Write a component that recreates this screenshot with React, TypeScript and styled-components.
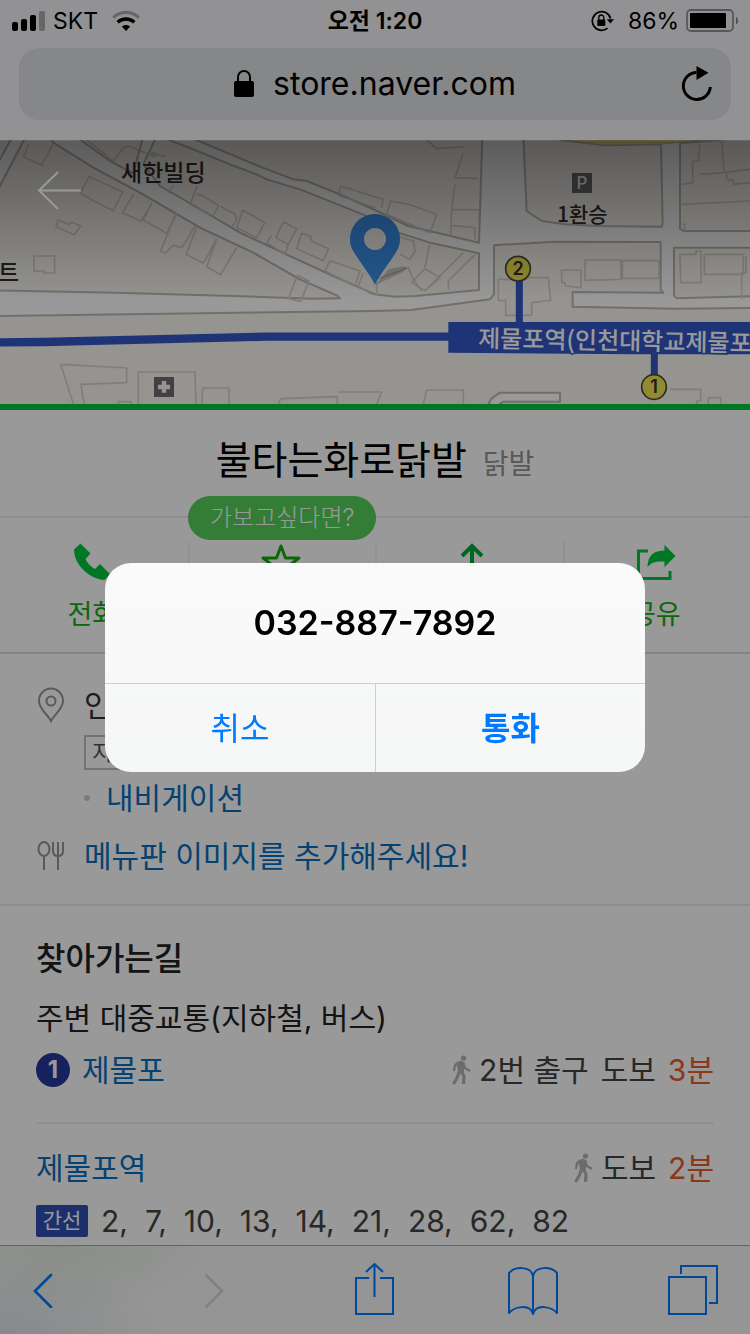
import React from 'react';
import styled, { createGlobalStyle } from 'styled-components';

const GlobalStyle = createGlobalStyle`
  *, *::before, *::after { box-sizing: border-box; }
  body {
    margin: 0;
    background: #fff;
    color: #333;
    font-family: Inter, 'Noto Sans CJK KR', sans-serif;
    font-size: 30px;
    line-height: 40px;
  }
  button {
    margin: 0;
    padding: 0;
    border: 0;
    background: none;
    color: inherit;
    font: inherit;
    cursor: pointer;
  }
  a { color: inherit; text-decoration: none; }
  h1, h2, h3, p, ul { margin: 0; padding: 0; font-size: inherit; font-weight: 400; }
  ul { list-style: none; }
  svg { display: block; flex: none; }
`;

const Page = styled.div`
  display: flex;
  flex-direction: column;
  min-height: 100vh;
  padding-bottom: 89px;
`;

/* ---------- Browser chrome ---------- */

const Chrome = styled.header`
  height: 140px;
  padding: 0 19px;
  background: #f3f4f7;
`;

const StatusBar = styled.div`
  display: grid;
  grid-template-columns: 1fr auto 1fr;
  align-items: center;
  height: 40px;
  margin: 0 -8px;
  color: #000;
  font-size: 23px;
  line-height: 42px;
`;

const StatusSide = styled.div<{ $end?: boolean }>`
  display: flex;
  align-items: center;
  justify-content: ${(p) => (p.$end ? 'flex-end' : 'flex-start')};
  gap: ${(p) => (p.$end ? 7 : 8)}px;
`;

const Carrier = styled.span`
  margin-right: 6px;
`;

const Percent = styled.span`
  margin-left: 6px;
`;

const Clock = styled.time`
  font-weight: 600;
`;

const AddressField = styled.div`
  display: grid;
  grid-template-columns: 1fr auto 1fr;
  align-items: center;
  height: 72px;
  margin-top: 8px;
  padding: 0 18px;
  border-radius: 20px;
  background: #dfe1e4;
`;

const AddressText = styled.div`
  grid-column: 2;
  display: flex;
  align-items: center;
  gap: 18px;
  color: #000;
  font-size: 32px;
  line-height: 42px;
`;

const Reload = styled.button`
  justify-self: end;
`;

/* ---------- Map ---------- */

const MapArea = styled.section`
  position: relative;
  height: 270px;
  overflow: hidden;
  background: #fff;
  border-bottom: 6px solid #00c73c;
`;

const MapShade = styled.div`
  position: absolute;
  inset: 0 0 auto 0;
  height: 160px;
  border-top: 1px solid rgba(0, 0, 0, 0.3);
  background: linear-gradient(rgba(0, 0, 0, 0.4), rgba(0, 0, 0, 0));
`;

const MapBack = styled.button`
  position: absolute;
  left: 36px;
  top: 29px;
`;

/* ---------- Store heading and actions ---------- */

const StoreHead = styled.section`
  display: flex;
  align-items: baseline;
  justify-content: center;
  gap: 16px;
  height: 106px;
  padding-top: 20px;
  line-height: 60px;
`;

const StoreName = styled.h1`
  color: #000;
  font-size: 39px;
`;

const StoreKind = styled.span`
  color: #959595;
  font-size: 28px;
`;

const Actions = styled.nav`
  display: grid;
  grid-template-columns: repeat(4, 1fr);
  height: 138px;
  padding-top: 24px;
  border-top: 2px solid #ececef;
  border-bottom: 2px solid #dadade;
`;

const ActionCell = styled.div`
  position: relative;
  display: flex;
  justify-content: center;
  height: 90px;
  padding-right: 3px;
  & + & { border-left: 2px solid #f2f2f4; }
`;

const Action = styled.button`
  display: flex;
  flex-direction: column;
  align-items: center;
  gap: 13px;
  color: #12ae12;
  font-size: 27px;
`;

const Tip = styled.span`
  position: absolute;
  top: -46px;
  left: 50%;
  width: 188px;
  height: 44px;
  transform: translateX(-50%);
  border-radius: 22px;
  background: rgba(70, 205, 78, 0.92);
  color: #fff;
  font-size: 24px;
  font-weight: 300;
  line-height: 44px;
  text-align: center;
`;

/* ---------- Information ---------- */

const Info = styled.section`
  display: flex;
  flex-direction: column;
  padding: 31px 36px 28px;
  border-bottom: 2px solid #ececef;
`;

const InfoRow = styled.div<{ $top?: number }>`
  display: grid;
  grid-template-columns: 48px 1fr;
  align-items: center;
  margin-top: ${(p) => p.$top ?? 0}px;
`;

const InfoSub = styled.div<{ $top: number }>`
  display: flex;
  align-items: center;
  gap: 16px;
  margin-top: ${(p) => p.$top}px;
  padding-left: 48px;
`;

const LotBadge = styled.span`
  height: 35px;
  padding: 0 6px;
  border: 2px solid #c0c0c0;
  color: #555;
  font-size: 22px;
  line-height: 30px;
`;

const Bullet = styled.i`
  width: 6px;
  height: 6px;
  border-radius: 50%;
  background: #ccc;
`;

const BlueLink = styled.a`
  color: #0b6ebd;
`;

/* ---------- Directions ---------- */

const Directions = styled.section`
  padding: 32px 36px 0;
`;

const SectionTitle = styled.h2`
  color: #222;
  font-size: 32px;
  font-weight: 500;
  line-height: 42px;
`;

const SubTitle = styled.h3`
  margin-top: 18px;
  color: #222;
`;

const Stop = styled.div<{ $line?: boolean }>`
  display: flex;
  align-items: center;
  justify-content: space-between;
  padding: ${(p) => (p.$line ? '12px 0 32px' : '24px 0 0')};
  border-bottom: ${(p) => (p.$line ? '2px solid #f0f0f2' : '0')};
`;

const StopName = styled.div`
  display: flex;
  align-items: center;
  gap: 12px;
`;

const LineNumber = styled.span`
  width: 34px;
  height: 34px;
  border-radius: 50%;
  background: #26379c;
  color: #fff;
  font-size: 24px;
  font-weight: 700;
  line-height: 34px;
  text-align: center;
`;

const Walk = styled.div`
  display: flex;
  align-items: center;
  gap: 8px;
  color: #444;
`;

const WalkPart = styled.span`
  margin-right: 4px;
`;

const Minutes = styled.em`
  color: #e65c2e;
  font-style: normal;
`;

const Buses = styled.div`
  display: flex;
  align-items: center;
  gap: 13px;
  margin-top: 12px;
`;

const BusKind = styled.span`
  width: 52px;
  height: 32px;
  border-radius: 2px;
  background: #3350b4;
  color: #fff;
  font-size: 21px;
  line-height: 32px;
  text-align: center;
`;

const BusList = styled.ul`
  display: flex;
  gap: 17px;
  color: #444;
  line-height: 42px;
`;

/* ---------- Bottom toolbar ---------- */

const Toolbar = styled.nav`
  position: fixed;
  inset: auto 0 0 0;
  display: flex;
  align-items: center;
  justify-content: space-between;
  height: 89px;
  padding: 0 32px 0 33px;
  border-top: 1px solid #a9a9a9;
  background:
    radial-gradient(ellipse 160px 70px at 60px 0, rgba(120, 170, 110, 0.16), rgba(120, 170, 110, 0)),
    radial-gradient(ellipse 170px 80px at 0 90px, rgba(90, 130, 160, 0.16), rgba(90, 130, 160, 0)),
    #f9f9f9;
  color: #007aff;
`;

const ToolGroup = styled.div<{ $share: number }>`
  display: flex;
  align-items: center;
  justify-content: space-between;
  width: ${(p) => p.$share}%;
`;

const Tool = styled.button`
  &:disabled { color: #d8d8d8; }
`;

/* ---------- Call dialog ---------- */

const Scrim = styled.div`
  position: fixed;
  inset: 0;
  display: flex;
  align-items: center;
  justify-content: center;
  padding: 20px;
  background: rgba(0, 0, 0, 0.4);
`;

const Dialog = styled.div`
  width: 100%;
  max-width: 540px;
  overflow: hidden;
  border-radius: 26px;
  background: linear-gradient(#f9faf9, #f5f6f6);
`;

const DialogTitle = styled.h2`
  padding: 40px 20px;
  color: #000;
  font-size: 34px;
  font-weight: 600;
  text-align: center;
`;

const DialogButtons = styled.div`
  display: grid;
  grid-template-columns: 1fr 1fr;
  border-top: 1px solid #cdced0;
`;

const DialogButton = styled.button<{ $strong?: boolean }>`
  height: 88px;
  padding-top: 2px;
  color: #007aff;
  font-size: 32px;
  font-weight: ${(p) => (p.$strong ? 600 : 400)};
  & + & { border-left: 1px solid #cdced0; }
`;

/* ---------- Drawings ---------- */

const Signal = () => (
  <svg width="34" height="20" viewBox="0 0 34 20">
    <rect x="1" y="11" width="6" height="9" rx="2" />
    <rect x="10" y="8" width="6" height="12" rx="2" />
    <rect x="19" y="4" width="6" height="16" rx="2" />
    <rect x="28" y="0" width="6" height="20" rx="2" opacity=".3" />
  </svg>
);

const Wifi = () => (
  <svg width="28" height="20" viewBox="0 0 28 20" fill="none">
    <path d="M1.2 6.600C8.400 -.2 19.600 -.2 26.800 6.600" stroke="#000" strokeWidth="3.200" opacity=".3" />
    <path d="M5.600 11.200c4.800-4.300 12-4.300 16.800 0" stroke="#000" strokeWidth="3.400" />
    <path d="M9.800 15.600c2.400-2.100 6-2.100 8.400 0L14 20z" fill="#000" />
  </svg>
);

const RotationLock = () => (
  <svg width="24" height="22" viewBox="0 0 24 22" fill="none">
    <path d="M19.600 8.500A9.300 9.300 0 1 0 16.500 18.200" stroke="#000" strokeWidth="1.700" />
    <path d="M15.800 9.200h7.200L19.400 13.600z" fill="#000" />
    <rect x="6.300" y="9.600" width="8" height="6.400" rx="1" fill="#000" />
    <path d="M7.800 10V7.500a2.500 2.500 0 0 1 5 0V10" stroke="#000" strokeWidth="1.300" />
  </svg>
);

const Battery = () => (
  <svg width="53" height="24" viewBox="0 0 53 24">
    <rect x="1" y="1" width="46" height="21" rx="4" fill="none" stroke="#000" strokeOpacity=".4" strokeWidth="1.800" />
    <rect x="4" y="4" width="36" height="15" rx="1" />
    <path d="M50 8c2.800 1 2.800 6.500 0 7.500z" opacity=".45" />
  </svg>
);

const Padlock = () => (
  <svg width="21" height="28" viewBox="0 0 21 28">
    <rect x="0" y="11" width="20" height="16" rx="2" />
    <path d="M4 12V7a6 6 0 0 1 12 0v5" fill="none" stroke="#000" strokeWidth="2" />
  </svg>
);

const ReloadIcon = () => (
  <svg width="32" height="36" viewBox="0 0 32 36">
    <path d="M15.500 6.500A13.500 13.500 0 1 0 29.300 21" fill="none" stroke="#000" strokeWidth="3" />
    <path d="M15.500 0v14L27.500 6.800z" />
  </svg>
);

const StoreMap = () => (
  <svg width="100%" height="264" viewBox="0 0 750 264" preserveAspectRatio="xMidYMid slice">
    <g transform="scale(.33333) translate(0 -12)" fill="none" strokeLinejoin="round">
      {/* land blocks between the roads */}
      <g fill="#faf7f1" stroke="#c0b8b2" strokeWidth="6">
        <path d="M-10 463 350 470 700 480 940 488 1020 487 1010 478 900 430 760 350 600 275 420 170 280 95 160 20 150 0H78L0 150-10 170z" />
        <path d="M-10 90 0 70 38 0H-10z" />
        <path d="M225 0 330 75 400 112 430 0z" />
        <path d="M470 0 430 85 480 150 610 225 720 290 880 365 1000 420 1125 475 1185 482 1245 480 1437 462V352L1290 320 1195 290 1095 238 1000 200 900 160 800 130 770 115 690 85 580 40 490 5z" />
        <path d="M560 0 680 50 780 92 880 130 920 135 1020 175 1125 222 1225 270 1437 320 1447 0z" />
        <path d="M1570 0 1580 225 1625 255 1695 265 1795 270 1985 272 1988 262 1983 25 1815 28 1680 12V0z" />
        <path d="M2040 22V278L2050 285H2270V0L2155 12z" />
        <path d="M2022 335V478L2030 487 2270 480V335z" />
        <path d="M-10 540 1125 525 1235 522 1470 490 1482 475V328L1665 317 1982 318V460L1990 470 1718 468V512L2030 518 2270 516V830H-10z" />
        <path d="M1465 804 1475 787 1500 770H1680V797H1510L1490 810z" fill="#fff" />
      </g>
      <path d="M1670 8 1815 28 1985 24 2150 8z" fill="#e8e08e" stroke="#c0b8b2" strokeWidth="3" />

      {/* buildings */}
      <g stroke="#d6d2cd" strokeWidth="5">
        <path d="M85 25 72 62 125 88 158 25M268 122 240 172 265 185 275 192 340 224 368 168zM400 175 368 230 422 255 455 205M455 200 430 252 500 292 530 232M525 240 482 345 495 352 520 328 545 335 562 310 585 270M590 275 558 355 610 382 650 308M650 308 620 392 662 416 710 335" />
        <path d="M175 252 168 272 222 296 242 270 215 258 208 266zM102 360H164V411H132V405H102zM892 418 865 488 903 496 926 435z" />
        <path d="M260 12 340 75 370 35 385 30 465 62 455 50 495 62M520 150 505 170M592 150 570 205 640 240M590 180 600 175 655 208 640 240M660 210 705 235 710 250 695 275M728 222 795 260 770 305 710 275zM850 258 890 278 865 325 828 305zM815 298 800 320 855 355 865 325M905 292 890 338 970 374 986 338 935 315 930 300zM990 374 975 405 1065 450 1080 405zM1090 410 1075 450 1115 475" />
        <path d="M1022 150 1015 178 1125 215M1022 150 1150 190M1280 12 1310 38 1390 32M1390 50 1365 125 1435 128M1365 145 1355 220 1440 222M1355 220 1352 300M1355 268 1425 275 1425 310M1172 195 1160 235 1290 290 1310 235 1225 205zM1150 190 1145 215M1190 300 1240 315 1245 345 1230 370 1200 355M1290 320 1275 395M1275 398 1235 440 1275 464 1320 425zM1390 350 1275 464M1425 355 1345 435V462M1130 430 1225 395 1240 430 1265 465M1130 430 1130 480" />
        <path d="M1495 430H1580V425H1645L1652 493 1595 500V538H1517V493H1495zM1685 402H1743V455L1695 450V440H1685zM1755 372H1863V430L1755 433zM1867 374H1977V427L1867 427zM2040 355H2088V345H2103V440H2042zM2113 355H2230V415L2113 415zM2238 360V410H2225V490M2100 25 2095 75H2078V140L2045 145M2165 12 2172 110 2100 115M2172 110 2250 100M2180 115V130L2200 133 2202 145 2250 140M2045 205 2250 195M2045 265H2054V285" />
        <path d="M182 685 380 696V740L243 745 252 804M182 685 220 804M415 804V708H585L588 804M605 804 608 756H687V804M355 804V797H393V804M835 804 842 788 1012 782V804M1015 768H1145L1130 804M1270 804 1280 762H1390V804M2010 760H2102V795H2090V804M2125 804V785H2162V804" />
      </g>

      {/* railway with its station */}
      <path d="M-10 619 130 618 800 602H1350" stroke="#3457c5" strokeWidth="25" />
      <path d="M1345 558H2260V655H1900L1345 650z" fill="#3457c5" />
      <path d="M1558 425V570M1963 640V730" stroke="#3457c5" strokeWidth="21" />
      <g fill="#f0e650" stroke="#4d4a38" strokeWidth="5">
        <circle cx="1554" cy="398" r="37" />
        <circle cx="1962" cy="753" r="37" />
      </g>

      {/* hospital and car park signs */}
      <g>
        <rect x="462" y="723" width="60" height="60" fill="#6f6c70" />
        <path d="M492 735V770M474 753H510" stroke="#faf7f1" strokeWidth="13" />
        <rect x="1716" y="111" width="60" height="60" fill="#6f6c70" />
      </g>

      {/* current place */}
      <path d="M1125 448 1165 400Q1245 380 1208 408z" fill="#000" opacity=".18" />
      <path d="M1125 447C1118 425 1062 355 1055 336A75 75 0 1 1 1195 336C1188 355 1132 425 1125 447z" fill="#3c93f0" />
      <circle cx="1125" cy="309" r="33" fill="#faf7f1" />
    </g>

    <g fill="#33302e" fontFamily="'Noto Sans CJK KR', sans-serif" fontSize="23" fontWeight="500">
      <text x="121" y="41">새한빌딩</text>
      <text x="-2" y="141">트</text>
      <text x="557" y="82" fontSize="21">1환승</text>
      <text x="478" y="207" fill="#fff" fontSize="24" fontWeight="500" stroke="#3457c5" strokeWidth="3" paintOrder="stroke" transform="rotate(1 478 207)">
        제물포역(인천대학교제물포
      </text>
      <g fontFamily="Inter, sans-serif" textAnchor="middle">
        <text x="518" y="135" fontSize="18" fontWeight="600">2</text>
        <text x="654" y="253" fontSize="18" fontWeight="600">1</text>
        <text x="582" y="49" fontSize="17" fontWeight="500" fill="#faf7f1">P</text>
      </g>
    </g>
  </svg>
);

const BackArrow = () => (
  <svg width="46" height="42" viewBox="0 0 46 42" fill="none" stroke="#fff" strokeWidth="2">
    <path d="M22 3 3 21.500 22 40M3 21.500H45" />
  </svg>
);

const Phone = () => (
  <svg width="40" height="40" viewBox="0 0 40 40" fill="#00c73c">
    <path d="M2 7.500 8.500 1.500 18.500 11.500 13.500 17Q16 23 23 27L28 22 38 32 32.500 38C20 38 2 24 2 7.500z" />
  </svg>
);

const Star = () => (
  <svg width="40" height="40" viewBox="0 0 40 40" fill="none" stroke="#12ae12" strokeWidth="3" strokeLinejoin="round">
    <path d="M20 4 24.500 16H38L27.500 24 31.500 37 20 29.500 8.500 37 12.500 24 2 16H15.500z" />
  </svg>
);

const UpArrow = () => (
  <svg width="40" height="40" viewBox="0 0 40 40" fill="none" stroke="#00a838" strokeWidth="4">
    <path d="M24 4V40M14 14 24 4 34 14" />
  </svg>
);

const Share = () => (
  <svg width="40" height="40" viewBox="0 0 40 40" fill="none">
    <path d="M12 9H2.500V36.500H34V29" stroke="#00c73c" strokeWidth="3" />
    <path d="M11.500 25C12 13 18 8.500 28.500 8.500V3L39.500 14 28.500 25V19.500C20 19 15.500 20 11.500 25z" fill="#00c73c" />
  </svg>
);

const PinOutline = () => (
  <svg width="30" height="36" viewBox="0 0 30 36" fill="none" stroke="#949494" strokeWidth="2">
    <path d="M15 34C12 28 3 22 3 14A12 12.500 0 0 1 27 14C27 22 18 28 15 34z" />
    <circle cx="15" cy="14" r="4.500" />
  </svg>
);

const Cutlery = () => (
  <svg width="30" height="32" viewBox="0 0 30 32" fill="none" stroke="#949494" strokeWidth="2">
    <ellipse cx="8" cy="9" rx="5.500" ry="7" />
    <path d="M8 16V30M17 2V11Q17 16 22 16 27 16 27 11V2M22 2V30" />
  </svg>
);

const Walker = () => (
  <svg width="20" height="30" viewBox="0 0 20 30" fill="none" stroke="#b4b4b4" strokeLinejoin="round">
    <circle cx="12.500" cy="3" r="2.600" fill="#b4b4b4" stroke="none" />
    <path d="M6 8 10 6.500 13 8 12 18 8 17z" fill="#b4b4b4" strokeWidth="1.500" />
    <path d="M8 7.500 4 10 3 16M12.500 9 14 13 19 16" strokeWidth="2.200" />
    <path d="M8.500 16 6.500 22 2.500 29M10.500 17 13 21 12.500 29" strokeWidth="3.200" />
  </svg>
);

const Chevron = ({ forward }: { forward?: boolean }) => (
  <svg width="20" height="36" viewBox="0 0 20 36" fill="none" stroke="currentColor" strokeWidth="2.600" strokeLinecap="round">
    <path d={forward ? 'M1 3 17 19 1 35' : 'M18 3 2 19 18 35'} />
  </svg>
);

const ShareSheet = () => (
  <svg width="44" height="54" viewBox="0 0 44 54" fill="none" stroke="currentColor" strokeWidth="2">
    <path d="M14 15H1V51H38V15H25M19.500 34V1M11 9 19.500 1 28 9" />
  </svg>
);

const Book = () => (
  <svg width="50" height="50" viewBox="0 0 50 50" fill="none" stroke="currentColor" strokeWidth="2" strokeLinejoin="round">
    <path d="M25 11V49M25 11C23 1 7 1 1 8V48C6 42 22 38 25 49 28 38 44 42 49 48V8C43 1 27 1 25 11z" />
  </svg>
);

const Tabs = () => (
  <svg width="50" height="50" viewBox="0 0 50 50" fill="none" stroke="currentColor" strokeWidth="2">
    <rect x="1" y="12" width="37" height="37" />
    <path d="M13 9V1H49V38H41" />
  </svg>
);

const BUSES = ['2', '7', '10', '13', '14', '21', '28', '62', '82'];

export default function App() {
  return (
    <>
      <GlobalStyle />
      <Page>
        <Chrome>
          <StatusBar>
            <StatusSide>
              <Signal />
              <Carrier>SKT</Carrier>
              <Wifi />
            </StatusSide>
            <Clock>오전 1:20</Clock>
            <StatusSide $end>
              <RotationLock />
              <Percent>86%</Percent>
              <Battery />
            </StatusSide>
          </StatusBar>
          <AddressField>
            <AddressText>
              <Padlock />
              <span>store.naver.com</span>
            </AddressText>
            <Reload aria-label="새로고침">
              <ReloadIcon />
            </Reload>
          </AddressField>
        </Chrome>

        <MapArea>
          <StoreMap />
          <MapShade />
          <MapBack aria-label="뒤로">
            <BackArrow />
          </MapBack>
        </MapArea>

        <StoreHead>
          <StoreName>불타는화로닭발</StoreName>
          <StoreKind>닭발</StoreKind>
        </StoreHead>

        <Actions>
          <ActionCell>
            <Action>
              <Phone />
              전화
            </Action>
          </ActionCell>
          <ActionCell>
            <Action aria-label="저장">
              <Star />
            </Action>
            <Tip>가보고싶다면?</Tip>
          </ActionCell>
          <ActionCell>
            <Action aria-label="길찾기">
              <UpArrow />
            </Action>
          </ActionCell>
          <ActionCell>
            <Action>
              <Share />
              공유
            </Action>
          </ActionCell>
        </Actions>

        <Info>
          <InfoRow>
            <PinOutline />
            <span>인천</span>
          </InfoRow>
          <InfoSub $top={10}>
            <LotBadge>지번</LotBadge>
          </InfoSub>
          <InfoSub $top={8}>
            <Bullet />
            <BlueLink href="#navigation">내비게이션</BlueLink>
          </InfoSub>
          <InfoRow $top={18}>
            <Cutlery />
            <BlueLink href="#menu">메뉴판 이미지를 추가해주세요!</BlueLink>
          </InfoRow>
        </Info>

        <Directions>
          <SectionTitle>찾아가는길</SectionTitle>
          <SubTitle>주변 대중교통(지하철, 버스)</SubTitle>
          <Stop $line>
            <StopName>
              <LineNumber>1</LineNumber>
              <BlueLink href="#subway">제물포</BlueLink>
            </StopName>
            <Walk>
              <Walker />
              <WalkPart>2번 출구</WalkPart>
              <WalkPart>도보</WalkPart>
              <Minutes>3분</Minutes>
            </Walk>
          </Stop>
          <Stop>
            <BlueLink href="#bus">제물포역</BlueLink>
            <Walk>
              <Walker />
              <WalkPart>도보</WalkPart>
              <Minutes>2분</Minutes>
            </Walk>
          </Stop>
          <Buses>
            <BusKind>간선</BusKind>
            <BusList>
              {BUSES.map((bus, i) => (
                <li key={bus}>{i < BUSES.length - 1 ? `${bus},` : bus}</li>
              ))}
            </BusList>
          </Buses>
        </Directions>
      </Page>

      <Toolbar>
        <ToolGroup $share={28}>
          <Tool aria-label="이전">
            <Chevron />
          </Tool>
          <Tool aria-label="다음" disabled>
            <Chevron forward />
          </Tool>
        </ToolGroup>
        <ToolGroup $share={53}>
          <Tool aria-label="공유하기">
            <ShareSheet />
          </Tool>
          <Tool aria-label="책갈피">
            <Book />
          </Tool>
          <Tool aria-label="탭">
            <Tabs />
          </Tool>
        </ToolGroup>
      </Toolbar>

      <Scrim>
        <Dialog role="alertdialog" aria-modal="true" aria-labelledby="call-number">
          <DialogTitle id="call-number">032-887-7892</DialogTitle>
          <DialogButtons>
            <DialogButton>취소</DialogButton>
            <DialogButton $strong>통화</DialogButton>
          </DialogButtons>
        </Dialog>
      </Scrim>
    </>
  );
}
